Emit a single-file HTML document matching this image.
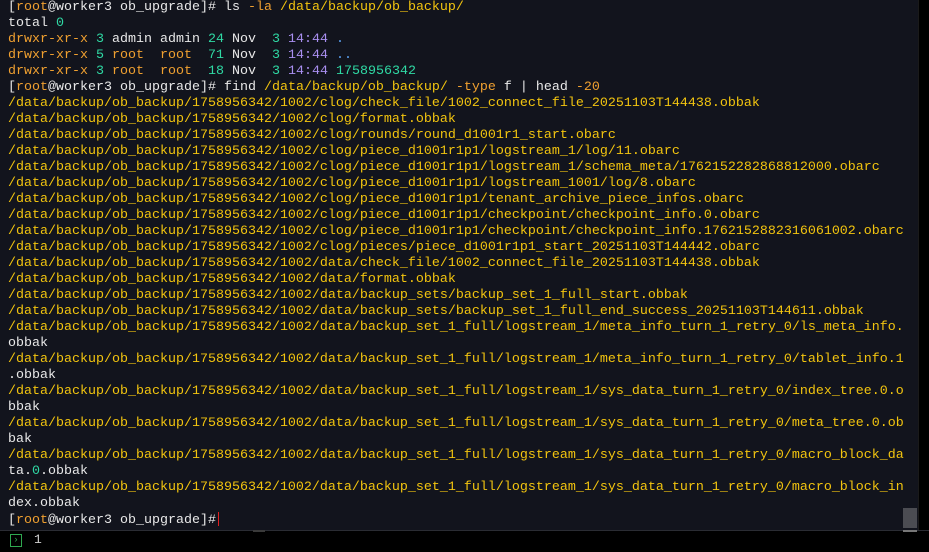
<!DOCTYPE html>
<html><head><meta charset="utf-8"><style>
html,body{margin:0;padding:0;width:929px;height:551px;overflow:hidden;background:#000;}
#term{position:absolute;left:0;top:0;width:918px;height:530px;background:#12141d;}
pre{margin:0;position:absolute;left:8px;top:0;font-family:"Liberation Mono",monospace;font-size:13.33px;line-height:16px;color:#e8e8e8;white-space:pre;}
.y{color:#f2c40f}.o{color:#f0a030}.t{color:#2fd9a4}.p{color:#a98ff0}.b{color:#5aa0f0}
#sb{position:absolute;left:903px;top:508px;width:14px;height:20px;background:#4b4c52;}
#bot{position:absolute;left:0;top:530px;width:929px;height:21px;background:#000;border-top:1px solid #2a2c33;}
#rs{position:absolute;left:918px;top:0;width:1px;height:551px;background:#1a1a1a;}
.cur{display:inline-block;width:1px;height:14px;background:#e02020;vertical-align:-3px;margin-left:2px}
</style></head><body>
<div id="term"><pre>[<span class="o">root</span>@worker3 ob_upgrade]# ls <span class="o">-la</span> <span class="y">/data/backup/ob_backup/</span>
total <span class="t">0</span>
<span class="o">drwxr-xr-x</span> <span class="t">3</span> admin admin <span class="t">24</span> Nov  <span class="t">3</span> <span class="p">14:44</span> <span class="b">.</span>
<span class="o">drwxr-xr-x</span> <span class="t">5</span> <span class="o">root</span>  <span class="o">root</span>  <span class="t">71</span> Nov  <span class="t">3</span> <span class="p">14:44</span> <span class="b">..</span>
<span class="o">drwxr-xr-x</span> <span class="t">3</span> <span class="o">root</span>  <span class="o">root</span>  <span class="t">18</span> Nov  <span class="t">3</span> <span class="p">14:44</span> <span class="t">1758956342</span>
[<span class="o">root</span>@worker3 ob_upgrade]# find <span class="y">/data/backup/ob_backup/</span> <span class="o">-type</span> f | head <span class="o">-20</span>
<span class="y">/data/backup/ob_backup/1758956342/1002/clog/check_file/1002_connect_file_20251103T144438.obbak
/data/backup/ob_backup/1758956342/1002/clog/format.obbak
/data/backup/ob_backup/1758956342/1002/clog/rounds/round_d1001r1_start.obarc
/data/backup/ob_backup/1758956342/1002/clog/piece_d1001r1p1/logstream_1/log/11.obarc
/data/backup/ob_backup/1758956342/1002/clog/piece_d1001r1p1/logstream_1/schema_meta/1762152282868812000.obarc
/data/backup/ob_backup/1758956342/1002/clog/piece_d1001r1p1/logstream_1001/log/8.obarc
/data/backup/ob_backup/1758956342/1002/clog/piece_d1001r1p1/tenant_archive_piece_infos.obarc
/data/backup/ob_backup/1758956342/1002/clog/piece_d1001r1p1/checkpoint/checkpoint_info.0.obarc
/data/backup/ob_backup/1758956342/1002/clog/piece_d1001r1p1/checkpoint/checkpoint_info.1762152882316061002.obarc
/data/backup/ob_backup/1758956342/1002/clog/pieces/piece_d1001r1p1_start_20251103T144442.obarc
/data/backup/ob_backup/1758956342/1002/data/check_file/1002_connect_file_20251103T144438.obbak
/data/backup/ob_backup/1758956342/1002/data/format.obbak
/data/backup/ob_backup/1758956342/1002/data/backup_sets/backup_set_1_full_start.obbak
/data/backup/ob_backup/1758956342/1002/data/backup_sets/backup_set_1_full_end_success_20251103T144611.obbak
/data/backup/ob_backup/1758956342/1002/data/backup_set_1_full/logstream_1/meta_info_turn_1_retry_0/ls_meta_info.</span>
obbak
<span class="y">/data/backup/ob_backup/1758956342/1002/data/backup_set_1_full/logstream_1/meta_info_turn_1_retry_0/tablet_info.1</span>
.obbak
<span class="y">/data/backup/ob_backup/1758956342/1002/data/backup_set_1_full/logstream_1/sys_data_turn_1_retry_0/index_tree.0.o</span>
bbak
<span class="y">/data/backup/ob_backup/1758956342/1002/data/backup_set_1_full/logstream_1/sys_data_turn_1_retry_0/meta_tree.0.ob</span>
bak
<span class="y">/data/backup/ob_backup/1758956342/1002/data/backup_set_1_full/logstream_1/sys_data_turn_1_retry_0/macro_block_da</span>
ta.<span class="t">0</span>.obbak
<span class="y">/data/backup/ob_backup/1758956342/1002/data/backup_set_1_full/logstream_1/sys_data_turn_1_retry_0/macro_block_in</span>
dex.obbak
[<span class="o">root</span>@worker3 ob_upgrade]#<span class="cur"></span></pre>
<div id="sb"></div></div>
<div id="rs"></div>
<div id="bot">
<div style="position:absolute;left:10px;top:3px;width:10px;height:11px;border:1px solid #2fa84f;color:#2fa84f;font:9px 'Liberation Mono',monospace;line-height:11px;text-align:center">›</div>
<div style="position:absolute;left:34px;top:1px;color:#cfcfcf;font:13px 'Liberation Mono',monospace;line-height:16px">1</div>
<div style="position:absolute;left:253px;top:-1px;width:12px;height:2px;background:#3a3a3a"></div>
<div style="position:absolute;left:903px;top:-1px;width:14px;height:2px;background:#777"></div>
</div>
</body></html>
